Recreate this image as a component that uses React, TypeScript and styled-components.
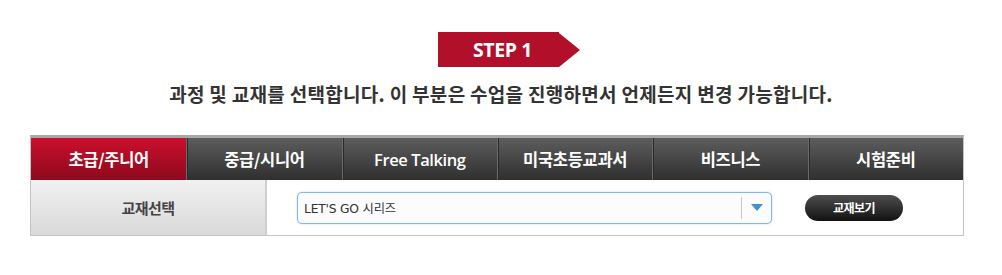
import React from "react";
import styled, { createGlobalStyle } from "styled-components";

const Global = createGlobalStyle`
  html, body { margin: 0; padding: 0; background: #fff; }
  body { font-family: "Noto Sans CJK KR", "Noto Sans", sans-serif; }
`;

const Page = styled.div`
  width: 1002px;
  padding-top: 32px;
  display: flex;
  flex-direction: column;
  align-items: center;
`;

const Step = styled.div`
  display: flex;
  align-items: center;
  height: 35px;
  margin-left: 16px;
`;

const StepBody = styled.div`
  width: 121px;
  height: 35px;
  background: #b20f2b;
  color: #fff;
  font-family: "Open Sans", "Noto Sans", sans-serif;
  font-weight: 700;
  font-size: 19.5px;
  display: flex;
  align-items: center;
  justify-content: center;
  padding-left: 8px;
  box-sizing: border-box;
  letter-spacing: -0.4px;
`;

const StepTip = styled.div`
  width: 0;
  height: 0;
  border-top: 17.5px solid transparent;
  border-bottom: 17.5px solid transparent;
  border-left: 21px solid #b20f2b;
`;

const Heading = styled.h2`
  margin: 14px 0 0;
  font-size: 19px;
  font-weight: 700;
  color: #333;
  letter-spacing: 0.3px;
  line-height: 26px;
`;

const Board = styled.div`
  margin: 28px 0 0 -8px;
  width: 934px;
  border: 1px solid #c4c4c4;
  border-top: 3px solid #a8a8a8;
  box-sizing: border-box;
`;

const Tabs = styled.div`
  display: grid;
  grid-template-columns: repeat(6, 1fr);
  height: 42px;
`;

const Tab = styled.div<{ $active?: boolean }>`
  display: flex;
  align-items: center;
  justify-content: center;
  color: #fff;
  font-size: 16.5px;
  font-weight: 700;
  letter-spacing: -0.3px;
  background: ${(p) =>
    p.$active
      ? "linear-gradient(#cb0f2c, #8c0a1e)"
      : "linear-gradient(#5d5d5d, #2f2f2f)"};
  border-left: ${(p) => (p.$active ? "none" : "1px solid #6a6a6a")};
  box-shadow: ${(p) => (p.$active ? "none" : "inset 1px 0 0 #2a2a2a")};
`;

const TabLatin = styled.span`
  font-family: "Open Sans", "Noto Sans", sans-serif;
  font-weight: 600;
  font-size: 16.5px;
  letter-spacing: -0.4px;
`;

const Row = styled.div`
  display: flex;
  height: 55px;
`;

const Label = styled.div`
  width: 234px;
  background: linear-gradient(#f1f1f1, #d9d9d9);
  border-right: 2px solid #cfcfcf;
  display: flex;
  align-items: center;
  justify-content: center;
  font-size: 15px;
  font-weight: 700;
  color: #444;
  letter-spacing: -0.5px;
`;

const Controls = styled.div`
  flex: 1;
  display: flex;
  align-items: center;
  padding-left: 30px;
  gap: 33px;
`;

const Select = styled.div`
  width: 475px;
  height: 32px;
  box-sizing: border-box;
  border: 1px solid #7db9ea;
  border-radius: 5px;
  background: #fcfcfc;
  display: flex;
  align-items: center;
  box-shadow: 0 0 2px rgba(125, 185, 234, 0.6);
`;

const SelectText = styled.div`
  flex: 1;
  padding-left: 6px;
  font-family: "DejaVu Sans", "Noto Sans CJK KR", sans-serif;
  font-size: 12.3px;
  color: #333;
  letter-spacing: -0.2px;
`;

const SelectArrow = styled.div`
  width: 29px;
  height: 22px;
  border-left: 1px solid #c8c8c8;
  display: flex;
  align-items: center;
  justify-content: center;
`;

const Triangle = styled.div`
  width: 0;
  height: 0;
  border-left: 6.5px solid transparent;
  border-right: 6.5px solid transparent;
  border-top: 7px solid #3d93cf;
`;

const ViewButton = styled.button`
  width: 98px;
  height: 26px;
  border: none;
  border-radius: 13px;
  background: linear-gradient(#4e4e4e, #121212);
  color: #fff;
  font-family: "Noto Sans CJK KR", sans-serif;
  font-size: 12px;
  font-weight: 700;
  letter-spacing: -0.5px;
  padding: 0;
  display: flex;
  align-items: center;
  justify-content: center;
`;

export default function App() {
  const tabs = ["초급/주니어", "중급/시니어", "Free Talking", "미국초등교과서", "비즈니스", "시험준비"];
  return (
    <>
      <Global />
      <Page>
        <Step>
          <StepBody>STEP 1</StepBody>
          <StepTip />
        </Step>
        <Heading>과정 및 교재를 선택합니다. 이 부분은 수업을 진행하면서 언제든지 변경 가능합니다.</Heading>
        <Board>
          <Tabs>
            {tabs.map((t, i) => (
              <Tab key={t} $active={i === 0}>
                {t === "Free Talking" ? <TabLatin>{t}</TabLatin> : t}
              </Tab>
            ))}
          </Tabs>
          <Row>
            <Label>교재선택</Label>
            <Controls>
              <Select>
                <SelectText>LET'S GO 시리즈</SelectText>
                <SelectArrow>
                  <Triangle />
                </SelectArrow>
              </Select>
              <ViewButton>교재보기</ViewButton>
            </Controls>
          </Row>
        </Board>
      </Page>
    </>
  );
}
